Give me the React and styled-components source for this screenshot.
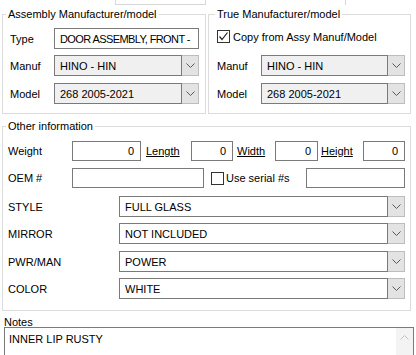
import React from 'react';
import styled, { createGlobalStyle } from 'styled-components';

const Global = createGlobalStyle`
  html, body { margin: 0; padding: 0; background: #fff; }
  body { font-family: "Liberation Sans", Arial, sans-serif; font-size: 11px; color: #000; }
  * { box-sizing: border-box; }
`;

const Page = styled.div`
  width: 416px;
  height: 355px;
  overflow: hidden;
  background: #fff;
  padding: 0 5px 0 2px;
`;

const TopStrip = styled.div`
  height: 5px;
  display: flex;
`;

const StripCell = styled.div`
  margin-left: ${p => p.$ml}px;
  width: ${p => p.$w}px;
  height: 5px;
  border-left: 1px solid #d8d8d8;
  border-right: ${p => (p.$closed ? '1px solid #d8d8d8' : 'none')};
  border-bottom: ${p => (p.$closed ? '1px solid #d8d8d8' : 'none')};
`;

const TopGroups = styled.div`
  display: flex;
  gap: 2px;
  margin-top: 2px;
`;

const Group = styled.fieldset`
  margin: ${p => p.$mt || 0}px 0 0 0;
  width: ${p => p.$w}px;
  min-width: 0;
  border: 1px solid #dcdcdc;
  padding: ${p => p.$pad};
  display: flex;
  flex-direction: column;
`;

const Legend = styled.legend`
  padding: 0 2px;
  margin-left: ${p => p.$ml}px;
  line-height: 14px;
  font-size: 11px;
`;

const Row = styled.div`
  display: flex;
  align-items: center;
  height: ${p => p.$h || 21}px;
  margin-top: ${p => p.$mt || 0}px;
`;

const Label = styled.div`
  width: ${p => p.$w}px;
  flex-shrink: 0;
  margin-left: ${p => p.$ml || 0}px;
  white-space: nowrap;
`;

const LinkLabel = styled.span`
  text-decoration: underline;
`;

const TextBox = styled.div`
  width: ${p => p.$w}px;
  height: 100%;
  flex-shrink: 0;
  margin-left: ${p => p.$ml || 0}px;
  border: 1px solid #7a7a7a;
  background: #fff;
  display: flex;
  align-items: center;
  justify-content: ${p => (p.$right ? 'flex-end' : 'flex-start')};
  padding: 0 ${p => (p.$right ? 6 : 0)}px 0 5px;
  letter-spacing: ${p => p.$ls || 0}px;
  white-space: nowrap;
  overflow: hidden;
`;

const Combo = styled.div`
  width: ${p => p.$w}px;
  height: 100%;
  flex-shrink: 0;
  display: flex;
`;

const ComboField = styled.div`
  flex: 1;
  height: 100%;
  border: 1px solid #7a7a7a;
  background: ${p => (p.$gray ? '#f0f0f0' : '#fff')};
  display: flex;
  align-items: center;
  padding-left: 5px;
  white-space: nowrap;
  overflow: hidden;
`;

const ComboButton = styled.div`
  width: 17px;
  height: 100%;
  background: #e3e3e3;
  border: 1px solid #bdbdbd;
  border-left: none;
  display: flex;
  align-items: center;
  justify-content: center;
`;

const CheckWrap = styled.label`
  display: flex;
  align-items: center;
  gap: ${p => p.$gap || 3}px;
  margin-left: ${p => p.$ml || 0}px;
  white-space: nowrap;
`;

const Box = styled.span`
  width: 13px;
  height: 13px;
  border: 1px solid #333;
  background: #fff;
  display: flex;
  align-items: center;
  justify-content: center;
  flex-shrink: 0;
`;

const Spacer = styled.div`
  flex: 1;
`;

const NotesLabel = styled.div`
  margin: 7px 0 0 2px;
  line-height: 9px;
  height: 9px;
`;

const NotesBox = styled.div`
  margin-left: 2px;
  width: 410px;
  height: 40px;
  border: 1px solid #7a7a7a;
  display: flex;
`;

const NotesText = styled.div`
  flex: 1;
  padding: 5px 0 0 4px;
  line-height: 12px;
`;

const ScrollTrack = styled.div`
  width: 17px;
  background: #f3f3f3;
  display: flex;
  justify-content: center;
  padding-top: 7px;
`;

const Chevron = ({ up, color = '#5a5a5a' }) => (
  <svg width="9" height="5" viewBox="0 0 9 5">
    <polyline
      points={up ? '0.5,4.5 4.5,0.5 8.5,4.5' : '0.5,0.5 4.5,4.5 8.5,0.5'}
      fill="none"
      stroke={color}
      strokeWidth="1"
    />
  </svg>
);

const Check = () => (
  <svg width="11" height="11" viewBox="0 0 11 11">
    <polyline points="1.5,5.5 4,8.5 9.5,1.5" fill="none" stroke="#222" strokeWidth="1.2" />
  </svg>
);

const DropDown = ({ w, value, gray }) => (
  <Combo $w={w}>
    <ComboField $gray={gray}>{value}</ComboField>
    <ComboButton>
      <Chevron />
    </ComboButton>
  </Combo>
);

const attributes = [
  ['STYLE', 'FULL GLASS', 0],
  ['MIRROR', 'NOT INCLUDED', 6],
  ['PWR/MAN', 'POWER', 7],
  ['COLOR', 'WHITE', 6],
];

export default function App() {
  return (
    <Page>
      <Global />
      <TopStrip>
        <StripCell $ml={113} $w={91} $closed />
        <StripCell $ml={139} $w={1} />
      </TopStrip>
      <TopGroups>
        <Group $w={204} $pad="7px 6px 9px 7px">
          <Legend $ml={-4}>Assembly Manufacturer/model</Legend>
          <Row>
            <Label $w={44}>Type</Label>
            <TextBox $w={145} $ls={-0.6}>DOOR ASSEMBLY, FRONT -</TextBox>
          </Row>
          <Row $mt={6}>
            <Label $w={44}>Manuf</Label>
            <DropDown w={145} value="HINO - HIN" gray />
          </Row>
          <Row $mt={7}>
            <Label $w={44}>Model</Label>
            <DropDown w={145} value="268 2005-2021" gray />
          </Row>
        </Group>
        <Group $w={203} $pad="7px 5px 9px 8px">
          <Legend $ml={-2}>True Manufacturer/model</Legend>
          <Row $h={17}>
            <CheckWrap>
              <Box>
                <Check />
              </Box>
              Copy from Assy Manuf/Model
            </CheckWrap>
          </Row>
          <Row $mt={10}>
            <Label $w={44}>Manuf</Label>
            <DropDown w={144} value="HINO - HIN" gray />
          </Row>
          <Row $mt={7}>
            <Label $w={44}>Model</Label>
            <DropDown w={144} value="268 2005-2021" gray />
          </Row>
        </Group>
      </TopGroups>
      <Group $w={409} $mt={5} $pad="8px 5px 11px 5px">
        <Legend $ml={-2}>Other information</Legend>
        <Row $h={20}>
          <Label $w={64}>Weight</Label>
          <TextBox $w={69} $right>0</TextBox>
          <Label $w={45} $ml={5}>
            <LinkLabel>Length</LinkLabel>
          </Label>
          <TextBox $w={42} $right>0</TextBox>
          <Label $w={38} $ml={4}>
            <LinkLabel>Width</LinkLabel>
          </Label>
          <TextBox $w={43} $right>0</TextBox>
          <Label $w={42} $ml={3}>
            <LinkLabel>Height</LinkLabel>
          </Label>
          <TextBox $w={42} $right>0</TextBox>
        </Row>
        <Row $h={20} $mt={7}>
          <Label $w={64}>OEM #</Label>
          <TextBox $w={132} />
          <CheckWrap $ml={7} $gap={2}>
            <Box />
            Use serial #s
          </CheckWrap>
          <Spacer />
          <TextBox $w={99} />
        </Row>
        {attributes.map(([name, value, mt], i) => (
          <Row key={name} $mt={i === 0 ? 8 : mt}>
            <Label $w={111}>{name}</Label>
            <DropDown w={286} value={value} />
          </Row>
        ))}
      </Group>
      <NotesLabel>Notes</NotesLabel>
      <NotesBox>
        <NotesText>INNER LIP RUSTY</NotesText>
        <ScrollTrack>
          <Chevron up color="#c2c2c2" />
        </ScrollTrack>
      </NotesBox>
    </Page>
  );
}
